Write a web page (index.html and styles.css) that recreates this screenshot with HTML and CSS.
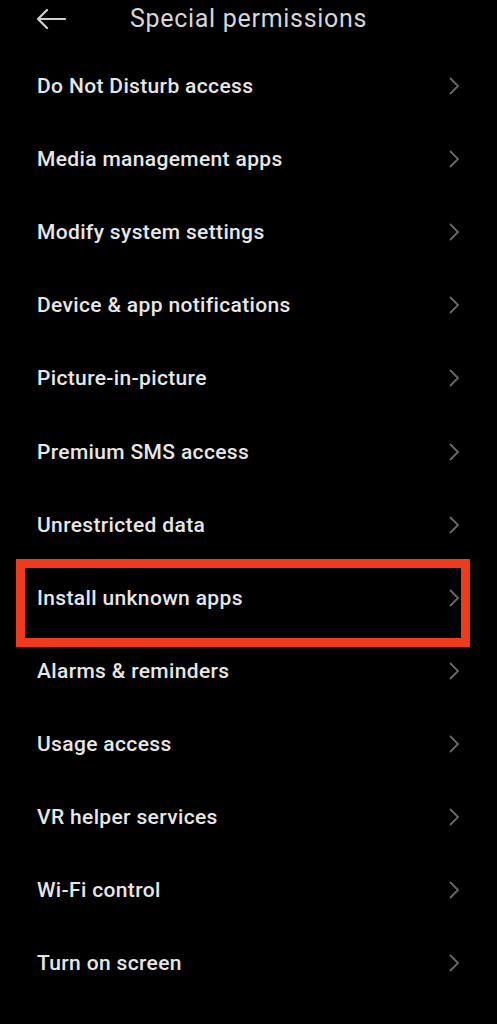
FILE: index.html
```html
<!DOCTYPE html>
<html>
<head>
<title>Special permissions</title>
<meta charset="utf-8">
<link rel="stylesheet" href="styles.css">
</head>
<body>
<div class="page">
	<div class="header">
		<a href="#" class="back"><svg width="30" height="22" viewBox="0 0 30 22"><path d="M29 11H2M11 2L2 11L11 20" fill="none" stroke="#d0d0d0" stroke-width="2.2" stroke-linecap="round" stroke-linejoin="round"/></svg></a>
		<h1>Special permissions</h1>
	</div>
	<ul class="list">
		<li><span>Do Not Disturb access</span><svg class="go" width="12" height="20" viewBox="0 0 12 20"><path d="M2 2L10 10L2 18" fill="none" stroke="#6a6a6a" stroke-width="1.8"/></svg></li>
		<li><span>Media management apps</span><svg class="go" width="12" height="20" viewBox="0 0 12 20"><path d="M2 2L10 10L2 18" fill="none" stroke="#6a6a6a" stroke-width="1.8"/></svg></li>
		<li><span>Modify system settings</span><svg class="go" width="12" height="20" viewBox="0 0 12 20"><path d="M2 2L10 10L2 18" fill="none" stroke="#6a6a6a" stroke-width="1.8"/></svg></li>
		<li><span>Device &amp; app notifications</span><svg class="go" width="12" height="20" viewBox="0 0 12 20"><path d="M2 2L10 10L2 18" fill="none" stroke="#6a6a6a" stroke-width="1.8"/></svg></li>
		<li><span>Picture-in-picture</span><svg class="go" width="12" height="20" viewBox="0 0 12 20"><path d="M2 2L10 10L2 18" fill="none" stroke="#6a6a6a" stroke-width="1.8"/></svg></li>
		<li><span>Premium SMS access</span><svg class="go" width="12" height="20" viewBox="0 0 12 20"><path d="M2 2L10 10L2 18" fill="none" stroke="#6a6a6a" stroke-width="1.8"/></svg></li>
		<li><span>Unrestricted data</span><svg class="go" width="12" height="20" viewBox="0 0 12 20"><path d="M2 2L10 10L2 18" fill="none" stroke="#6a6a6a" stroke-width="1.8"/></svg></li>
		<li><span>Install unknown apps</span><svg class="go" width="12" height="20" viewBox="0 0 12 20"><path d="M2 2L10 10L2 18" fill="none" stroke="#6a6a6a" stroke-width="1.8"/></svg></li>
		<li><span>Alarms &amp; reminders</span><svg class="go" width="12" height="20" viewBox="0 0 12 20"><path d="M2 2L10 10L2 18" fill="none" stroke="#6a6a6a" stroke-width="1.8"/></svg></li>
		<li><span>Usage access</span><svg class="go" width="12" height="20" viewBox="0 0 12 20"><path d="M2 2L10 10L2 18" fill="none" stroke="#6a6a6a" stroke-width="1.8"/></svg></li>
		<li><span>VR helper services</span><svg class="go" width="12" height="20" viewBox="0 0 12 20"><path d="M2 2L10 10L2 18" fill="none" stroke="#6a6a6a" stroke-width="1.8"/></svg></li>
		<li><span>Wi-Fi control</span><svg class="go" width="12" height="20" viewBox="0 0 12 20"><path d="M2 2L10 10L2 18" fill="none" stroke="#6a6a6a" stroke-width="1.8"/></svg></li>
		<li><span>Turn on screen</span><svg class="go" width="12" height="20" viewBox="0 0 12 20"><path d="M2 2L10 10L2 18" fill="none" stroke="#6a6a6a" stroke-width="1.8"/></svg></li>
	</ul>
	<div class="mark"></div>
</div>
</body>
</html>
```
FILE: styles.css
```css
body, ul, li, h1, div { margin: 0; padding: 0; }
html, body { background: #000; }
body { font-family: Roboto, "Noto Sans", sans-serif; color: #e6e6e6; }
li { list-style: none; }
a { text-decoration: none; }

.page { width: 497px; height: 1024px; position: relative; overflow: hidden; }

.header { height: 49.5px; display: flex; align-items: flex-start; }
.header .back { display: flex; align-items: center; height: 38px; padding-left: 36px; width: 130px; box-sizing: border-box; }
.header h1 { font-size: 25px; font-weight: 400; line-height: 38px; letter-spacing: 0.7px; color: #d6d6d6; }

.list li { height: 73.1px; display: flex; align-items: center; justify-content: space-between; padding: 0 37px 0 37px; font-size: 21px; font-weight: 500; letter-spacing: 0.35px; }
.list li span { line-height: 28px; }
.list .go { display: block; }

.mark { position: absolute; left: 16px; top: 559px; width: 454px; height: 88px; box-sizing: border-box; border: 9.5px solid #ee3a1d; }
```
